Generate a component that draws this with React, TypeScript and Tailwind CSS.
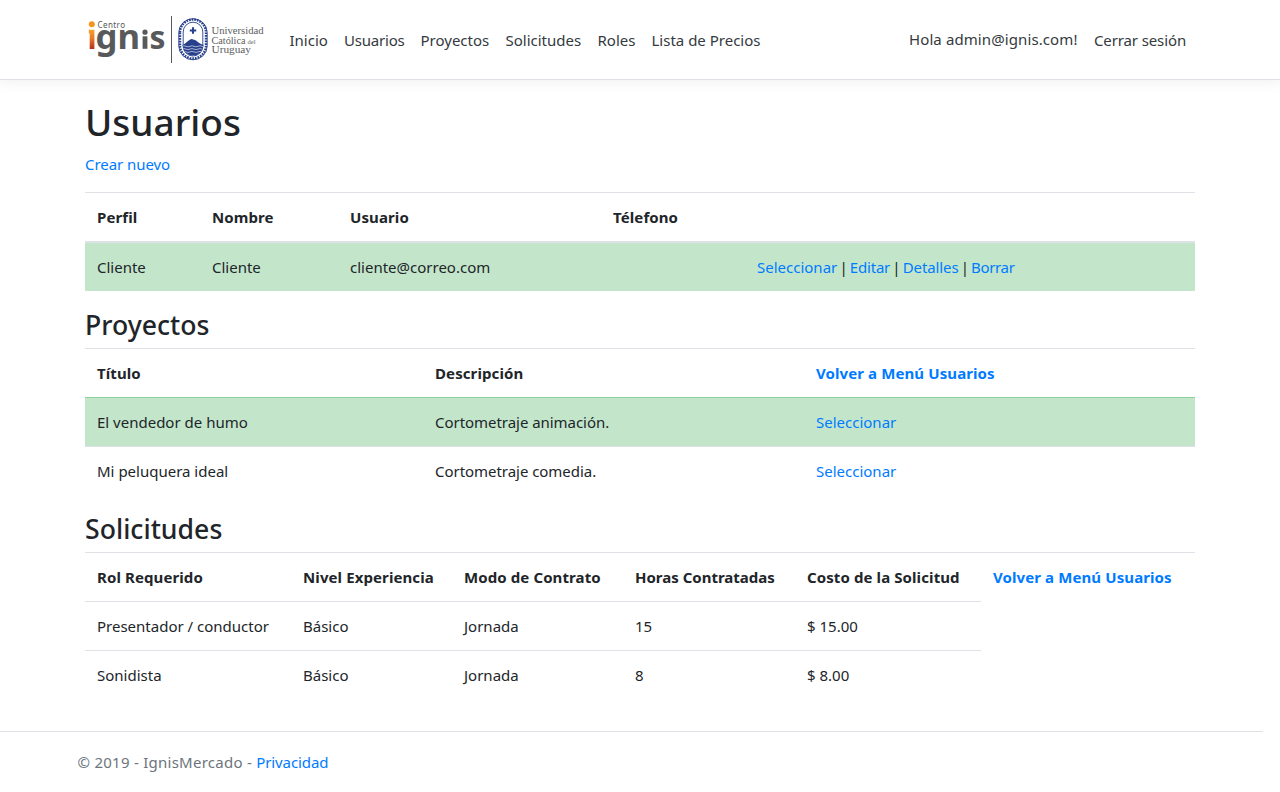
import type { ReactNode } from "react";

function Logo() {
  return (
    <svg width="180" height="52" viewBox="85 13 180 52" className="block shrink-0" role="img" aria-label="Centro Ignis">
      <defs>
        <linearGradient id="flame" x1="0" y1="0" x2="0" y2="1">
          <stop offset="0" stopColor="#f9a12b" />
          <stop offset="0.45" stopColor="#ea7a26" />
          <stop offset="1" stopColor="#b5301c" />
        </linearGradient>
        <clipPath id="shield">
          <path d="M182.5 31a10.5 10.5 0 0 1 21 0v14a10.5 10.5 0 0 1-21 0z" />
        </clipPath>
      </defs>
      <circle cx="91.8" cy="24.3" r="3" fill="#f7941e" />
      <path d="M88.8 29.7h5.6v19.2h-4.7V33.3h-.9z" fill="url(#flame)" />
      <text x="97.5" y="27.8" fontSize="8" textLength="27.5" className="fill-[#55565a] font-['Noto_Sans',sans-serif]">Centro</text>
      <text x="95.5" y="48.8" fontSize="34" textLength="44.5" lengthAdjust="spacingAndGlyphs" className="fill-[#58595b] font-bold font-['Noto_Sans',sans-serif]">gn</text>
      <circle cx="145" cy="32.2" r="2.6" fill="#58595b" />
      <rect x="142.6" y="36.3" width="4.8" height="12.5" fill="#58595b" />
      <text x="149.6" y="48.8" fontSize="32" textLength="16" lengthAdjust="spacingAndGlyphs" className="fill-[#58595b] font-bold font-['Noto_Sans',sans-serif]">s</text>
      <rect x="171" y="16" width="1" height="47" fill="#58595b" />
      <path d="M180 32.5a13 13 0 0 1 26 0v13a13 13 0 0 1-26 0z" fill="none" stroke="#27408b" strokeWidth="2.4" strokeDasharray="1.7 1" />
      <path d="M178.8 32.5a14.2 13.8 0 0 1 28.4 0v13.5a14.2 13.8 0 0 1-28.4 0z" fill="none" stroke="#27408b" strokeWidth="0.9" />
      <path d="M183.2 32a9.8 9.8 0 0 1 19.6 0v14.2a9.8 9.8 0 0 1-19.6 0z" fill="#fff" stroke="#27408b" strokeWidth="0.9" />
      <path d="M192 27.3h2v2.2h2.2v2H194v2.2h-2v-2.2h-2.2v-2h2.2z" fill="#27408b" />
      <g clipPath="url(#shield)">
        <path d="M182 45c4-1 6.5-5.5 10-6 1.5.9 2.5.4 4 1.5 2.5 2 4.5 3.5 8 4.5V57h-22z" fill="#27408b" />
        <path d="M182 46.3q2-1 4 0t4 0 4 0 4 0 4 0 4 0M182 49.1q2-1 4 0t4 0 4 0 4 0 4 0 4 0M182 51.9q2-1 4 0t4 0 4 0 4 0 4 0 4 0" fill="none" stroke="#c9d1e8" strokeWidth="0.8" />
      </g>
      <g className="fill-[#5c5d61] font-['Liberation_Serif',serif]">
        <text x="211.5" y="34" fontSize="11" textLength="52" lengthAdjust="spacingAndGlyphs">Universidad</text>
        <text x="211.5" y="43.5" fontSize="11" textLength="34" lengthAdjust="spacingAndGlyphs">Católica</text>
        <text x="247.5" y="43.5" fontSize="7" textLength="8" lengthAdjust="spacingAndGlyphs">del</text>
        <text x="211.5" y="52.5" fontSize="11" textLength="39.5" lengthAdjust="spacingAndGlyphs">Uruguay</text>
      </g>
    </svg>
  );
}

function A({ children, className = "" }: { children: ReactNode; className?: string }) {
  return <a href="#" className={`text-[#007bff] ${className}`}>{children}</a>;
}

const th = "h-[49px] border-t border-[#dee2e6] px-3 py-0 text-left align-middle font-bold tracking-[0.1px]";
const td = "h-[49px] border-t border-[#dee2e6] px-3 py-0 align-middle";
const table = "w-full table-fixed border-separate border-spacing-0";

const requests = [
  ["Presentador / conductor", "Básico", "Jornada", "15", "$ 15.00"],
  ["Sonidista", "Básico", "Jornada", "8", "$ 8.00"],
];

export default function App() {
  return (
    <div className="flex h-[792px] flex-col overflow-hidden bg-white font-['Noto_Sans',sans-serif] text-[15px] leading-6 text-[#212529]">
      <header className="h-20 shrink-0 border-b border-[#dee2e6] shadow-[0_4px_12px_rgba(0,0,0,0.05)]">
        <nav className="mx-auto flex h-[79px] w-[1110px] items-center text-[#343a40]">
          <div className="-mt-0.5"><Logo /></div>
          <ul className="ml-[24.5px] flex gap-4">
            <li className="w-[38.5px]">Inicio</li>
            <li className="w-[60.5px] tracking-[-0.2px]">Usuarios</li>
            <li className="w-[69px]">Proyectos</li>
            <li className="w-[76px]">Solicitudes</li>
            <li className="w-[38px]">Roles</li>
            <li className="whitespace-nowrap">Lista de Precios</li>
          </ul>
          <div className="mr-[9px] ml-auto flex gap-4 whitespace-nowrap">
            <span className="-mt-px mb-px w-[169px] tracking-[0.1px]">Hola admin@ignis.com!</span>
            <span className="w-[92px] tracking-[-0.12px]">Cerrar sesión</span>
          </div>
        </nav>
      </header>

      <main className="mx-auto flex w-[1110px] flex-col">
        <h1 className="mt-[18px] h-12 text-[37px] leading-12 font-medium">Usuarios</h1>
        <p className="mt-[6px] tracking-[-0.06px]"><A>Crear nuevo</A></p>

        <table className={`${table} mt-4`}>
          <colgroup>
            <col className="w-[115px]" /><col className="w-[138px]" /><col className="w-[263px]" /><col className="w-[144px]" /><col />
          </colgroup>
          <thead>
            <tr><th className={th}>Perfil</th><th className={th}>Nombre</th><th className={th}>Usuario</th><th className={th}>Télefono</th><th className={th} /></tr>
          </thead>
          <tbody>
            <tr className="bg-[#c3e6cb] [&>td]:h-[50px] [&>td]:border-t-2">
              <td className={td}>Cliente</td><td className={td}>Cliente</td><td className={td}>cliente@correo.com</td><td className={td} />
              <td className={`${td} whitespace-nowrap tracking-[-0.1px] [word-spacing:-1.6px]`}><A className="tracking-normal">Seleccionar</A> | <A className="tracking-[-0.2px]">Editar</A> | <A>Detalles</A> | <A className="tracking-[-0.35px]">Borrar</A></td>
            </tr>
          </tbody>
        </table>

        <h2 className="mt-4 h-[41px] text-[26.6px] leading-9 font-medium">Proyectos</h2>
        <table className={table}>
          <colgroup><col className="w-[338px]" /><col className="w-[381px]" /><col /></colgroup>
          <thead>
            <tr><th className={th}>Título</th><th className={th}>Descripción</th><th className={th}><A>Volver a Menú Usuarios</A></th></tr>
          </thead>
          <tbody>
            <tr className="bg-[#c3e6cb] [&>td]:border-t-[#8fd19e]">
              <td className={td}>El vendedor de humo</td><td className={`${td} tracking-[-0.04px]`}>Cortometraje animación.</td><td className={td}><A>Seleccionar</A></td>
            </tr>
            <tr>
              <td className={td}>Mi peluquera ideal</td><td className={`${td} tracking-[-0.04px]`}>Cortometraje comedia.</td><td className={td}><A>Seleccionar</A></td>
            </tr>
          </tbody>
        </table>

        <h2 className="mt-4 h-[41px] text-[26.6px] leading-9 font-medium tracking-[0.03px]">Solicitudes</h2>
        <table className={`${table} whitespace-nowrap`}>
          <colgroup>
            <col className="w-[206px]" /><col className="w-[161px]" /><col className="w-[171px]" /><col className="w-[172px]" /><col className="w-[186px]" /><col />
          </colgroup>
          <thead>
            <tr>
              <th className={th}>Rol Requerido</th><th className={th}>Nivel Experiencia</th><th className={th}>Modo de Contrato</th><th className={th}><span className="tracking-normal">Horas Contratadas</span></th><th className={th}>Costo de la Solicitud</th><th className={th}><A>Volver a Menú Usuarios</A></th>
            </tr>
          </thead>
          <tbody>
            {requests.map((row) => (
              <tr key={row[0]}>{row.map((cell, i) => <td key={i} className={td}>{cell}</td>)}</tr>
            ))}
          </tbody>
        </table>
      </main>

      <footer className="mt-auto mr-[17px] h-[61px] shrink-0 border-t border-[#dee2e6] pt-[18px] pl-[77.5px] text-[#6c757d]">
        <span className="tracking-[0.26px]">© 2019 - IgnisMercado - </span><A className="tracking-[-0.1px]">Privacidad</A>
      </footer>
    </div>
  );
}
